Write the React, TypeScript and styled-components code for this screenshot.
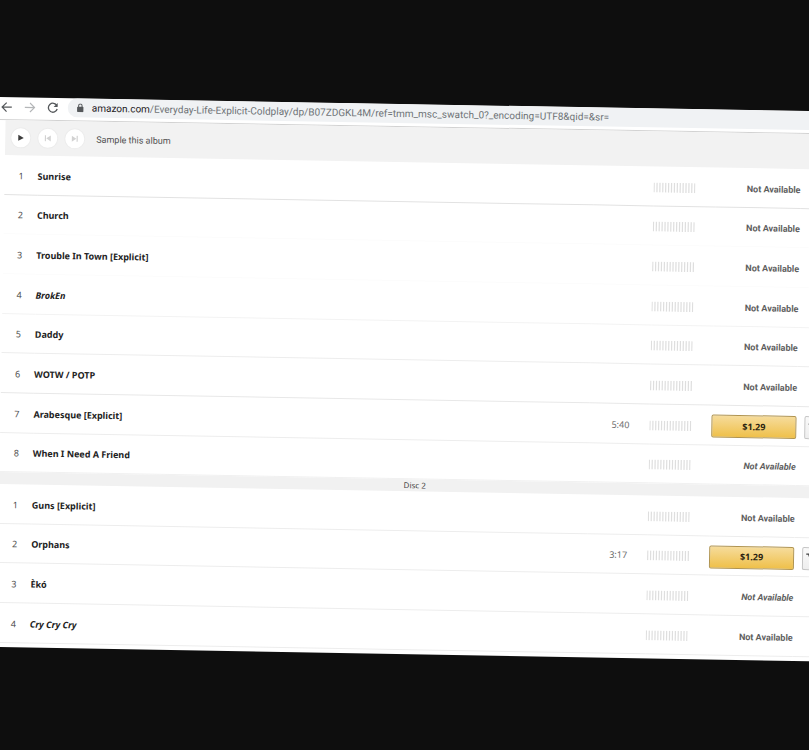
import React from "react";
import styled, { createGlobalStyle } from "styled-components";

const GlobalStyle = createGlobalStyle`
  *, *::before, *::after { box-sizing: border-box; }
  html { background: #0e0e0e; }
  body { margin: 0; background: #0e0e0e; font-family: "Noto Sans", "Open Sans", sans-serif; }
`;

const Stage = styled.div`
  min-height: 100vh;
  padding-top: 97px;
  overflow: hidden;
  background: #0e0e0e;
`;

const Sheet = styled.main`
  width: calc(100% + 28px);
  padding-bottom: 4px;
  background: #ffffff;
  overflow: hidden;
  transform: rotate(1deg);
  transform-origin: 0 0;
`;

const BrowserBar = styled.header`
  display: flex;
  align-items: flex-start;
  height: 23px;
  border-bottom: 1px solid #d2d2d2;
`;

const BrowserNav = styled.nav`
  display: flex;
  gap: 9px;
  width: 68px;
  height: 19px;
  align-items: center;
`;

const NavButton = styled.button<{ $faded?: boolean }>`
  display: flex;
  align-items: center;
  justify-content: center;
  width: 14px;
  height: 14px;
  padding: 0;
  border: 0;
  background: none;
  color: ${(p) => (p.$faded ? "#b4b6b8" : "#55585b")};
`;

const AddressBar = styled.form`
  display: flex;
  flex: 1;
  align-items: center;
  height: 19px;
  padding-left: 9px;
  border-radius: 10px 0 0 10px;
  background: #f0f2f4;
  font-family: Roboto, sans-serif;
  font-size: 10px;
  line-height: 18px;
`;

const Host = styled.label`
  display: flex;
  align-items: center;
  gap: 8px;
  color: #1e2023;
`;

const PathInput = styled.input`
  flex: 1;
  min-width: 0;
  padding: 0;
  border: 0;
  outline: 0;
  background: none;
  color: #6e7276;
  font: inherit;
`;

const Player = styled.section`
  display: flex;
  align-items: center;
  gap: 6px;
  height: 35px;
  margin-left: 6px;
  padding-left: 5px;
  background: #f2f2f2;
`;

const RoundButton = styled.button<{ $off?: boolean }>`
  display: flex;
  align-items: center;
  justify-content: center;
  width: 21px;
  height: 21px;
  padding: 0;
  border: 1px solid #ececec;
  border-radius: 50%;
  background: #ffffff;
  color: ${(p) => (p.$off ? "#d2d2d2" : "#3c3c3c")};
`;

const SampleText = styled.span`
  margin-left: 5px;
  color: #505050;
  font-family: Roboto, sans-serif;
  font-size: 9px;
  line-height: 12px;
`;

const TrackTable = styled.table`
  width: calc(100% - 6px);
  margin-left: 6px;
  border-collapse: separate;
  border-spacing: 0;
  table-layout: fixed;
  font-size: 9px;
  line-height: 12px;
`;

const Col = styled.col<{ $width?: number }>`
  width: ${(p) => (p.$width ? `${p.$width}px` : "auto")};
`;

const Row = styled.tr<{ $line: string }>`
  height: 40px;
  &:nth-child(3n + 2) { height: 39px; }
  & > td { border-bottom: 1px solid ${(p) => p.$line}; }
`;

const Cell = styled.td`
  padding: 2px 0 0;
  vertical-align: middle;
  white-space: nowrap;
`;

const NumberCell = styled(Cell)`
  text-align: center;
  color: #505050;
`;

const TitleCell = styled(Cell)<{ $slanted?: boolean }>`
  color: #222222;
  font-weight: 700;
  font-style: ${(p) => (p.$slanted ? "italic" : "normal")};
`;

const TimeCell = styled(Cell)`
  padding-right: 20px;
  text-align: right;
  color: #6c6c6c;
`;

const ActionCell = styled(Cell)`
  text-align: right;
`;

const CartCell = styled(Cell)`
  padding-left: 8px;
`;

const Unavailable = styled.span<{ $slanted?: boolean }>`
  color: #5e5e5e;
  font-family: Roboto, sans-serif;
  font-size: 9px;
  font-weight: 700;
  font-style: ${(p) => (p.$slanted ? "italic" : "normal")};
`;

const BarsSvg = styled.svg`
  display: block;
`;

const BuyButton = styled.button`
  display: block;
  width: 100%;
  height: 23px;
  padding: 0;
  border: 1px solid #b09450;
  border-radius: 2px;
  background: linear-gradient(#f6dc9c, #efc04a);
  color: #2a2412;
  font: 700 9px/12px "Noto Sans", sans-serif;
`;

const CartButton = styled.button`
  display: flex;
  align-items: center;
  width: 27px;
  height: 23px;
  padding: 0 0 0 3px;
  border: 1px solid #c4c4c4;
  border-radius: 2px 0 0 2px;
  background: linear-gradient(#fafafa, #eeeeee);
  color: #444444;
`;

const DiscBar = styled.h2`
  height: 12px;
  margin: 0 0 0 6px;
  background: #f1f1f1;
  color: #444444;
  font-size: 8px;
  font-weight: 400;
  line-height: 12px;
  text-align: center;
`;

const Popularity = () => (
  <BarsSvg width="42" height="10" viewBox="0 0 42 10" aria-label="Popularity">
    {Array.from({ length: 15 }, (_, i) => (
      <rect key={i} x={i * 2.9} y="0" width="1.2" height="10" fill="#dedede" />
    ))}
  </BarsSvg>
);

type Track = {
  n: number;
  title: string;
  time?: string;
  price?: string;
  slanted?: boolean;
  slantedStatus?: boolean;
  line?: string;
};

const discOne: Track[] = [
  { n: 1, title: "Sunrise", line: "#e2e2e2" },
  { n: 2, title: "Church", line: "#fcfcfc" },
  { n: 3, title: "Trouble In Town [Explicit]", line: "#fcfcfc" },
  { n: 4, title: "BrokEn", slanted: true, line: "#f3f3f3" },
  { n: 5, title: "Daddy" },
  { n: 6, title: "WOTW / POTP", line: "#e8e8e8" },
  { n: 7, title: "Arabesque [Explicit]", time: "5:40", price: "$1.29" },
  { n: 8, title: "When I Need A Friend", slantedStatus: true, line: "#f1f1f1" },
];

const discTwo: Track[] = [
  { n: 1, title: "Guns [Explicit]" },
  { n: 2, title: "Orphans", time: "3:17", price: "$1.29" },
  { n: 3, title: "Èkó", slantedStatus: true },
  { n: 4, title: "Cry Cry Cry", slanted: true },
];

const TrackList = ({ tracks }: { tracks: Track[] }) => (
  <TrackTable>
    <colgroup>
      <Col $width={33} />
      <Col />
      <Col $width={60} />
      <Col $width={62} />
      <Col $width={85} />
      <Col $width={35} />
    </colgroup>
    <tbody>
      {tracks.map((t) => (
        <Row key={t.n} $line={t.line ?? "#ededed"}>
          <NumberCell>{t.n}</NumberCell>
          <TitleCell $slanted={t.slanted}>{t.title}</TitleCell>
          <TimeCell>{t.time}</TimeCell>
          <Cell><Popularity /></Cell>
          <ActionCell>
            {t.price ? (
              <BuyButton type="button">{t.price}</BuyButton>
            ) : (
              <Unavailable $slanted={t.slantedStatus}>Not Available</Unavailable>
            )}
          </ActionCell>
          <CartCell>
            {t.price && (
              <CartButton type="button" aria-label={`Add ${t.title} to cart`}>
                <svg width="13" height="12" viewBox="0 0 13 12" fill="none" stroke="currentColor" strokeWidth="1.3">
                  <path d="M0 2h2.5l2 5.5h6L12 3.5H3.2" />
                  <circle cx="5.3" cy="10" r=".8" />
                  <circle cx="9.8" cy="10" r=".8" />
                </svg>
              </CartButton>
            )}
          </CartCell>
        </Row>
      ))}
    </tbody>
  </TrackTable>
);

export default function App() {
  return (
    <>
      <GlobalStyle />
      <Stage>
        <Sheet>
          <BrowserBar>
            <BrowserNav aria-label="Browser">
              <NavButton type="button" aria-label="Back">
                <svg width="12" height="12" viewBox="0 0 12 12" fill="none" stroke="currentColor" strokeWidth="1.2">
                  <path d="M11 6H1.5M5.8 1.5 1.3 6l4.5 4.5" />
                </svg>
              </NavButton>
              <NavButton type="button" aria-label="Forward" $faded>
                <svg width="12" height="12" viewBox="0 0 12 12" fill="none" stroke="currentColor" strokeWidth="1.2">
                  <path d="M1 6h9.5M6.2 1.5 10.7 6l-4.5 4.5" />
                </svg>
              </NavButton>
              <NavButton type="button" aria-label="Reload">
                <svg width="12" height="12" viewBox="0 0 12 12" fill="none" stroke="currentColor" strokeWidth="1.3">
                  <path d="M10 3.6A4.5 4.5 0 1 0 10.4 7" />
                  <path d="M10.8 1v4H6.8z" fill="currentColor" stroke="none" />
                </svg>
              </NavButton>
            </BrowserNav>
            <AddressBar>
              <Host htmlFor="path">
                <svg width="7" height="9" viewBox="0 0 7 9">
                  <rect x=".3" y="3.3" width="6.4" height="5.4" rx=".7" fill="#55585b" />
                  <path d="M1.8 3.6V2.2a1.7 1.7 0 0 1 3.4 0v1.4" fill="none" stroke="#55585b" />
                </svg>
                amazon.com
              </Host>
              <PathInput
                id="path"
                defaultValue="/Everyday-Life-Explicit-Coldplay/dp/B07ZDGKL4M/ref=tmm_msc_swatch_0?_encoding=UTF8&qid=&sr="
              />
            </AddressBar>
          </BrowserBar>
          <Player>
            <RoundButton type="button" aria-label="Play">
              <svg width="7" height="7" viewBox="0 0 7 7" fill="currentColor">
                <path d="M1 .5 6.5 3.5 1 6.5z" />
              </svg>
            </RoundButton>
            <RoundButton type="button" aria-label="Previous" $off>
              <svg width="7" height="7" viewBox="0 0 7 7" fill="currentColor">
                <path d="M.5.5h1.2v6H.5zM6.5.5v6L2 3.5z" />
              </svg>
            </RoundButton>
            <RoundButton type="button" aria-label="Next" $off>
              <svg width="7" height="7" viewBox="0 0 7 7" fill="currentColor">
                <path d="M5.3.5h1.2v6H5.3zM.5.5v6L5 3.5z" />
              </svg>
            </RoundButton>
            <SampleText>Sample this album</SampleText>
          </Player>
          <TrackList tracks={discOne} />
          <DiscBar>Disc 2</DiscBar>
          <TrackList tracks={discTwo} />
        </Sheet>
      </Stage>
    </>
  );
}
